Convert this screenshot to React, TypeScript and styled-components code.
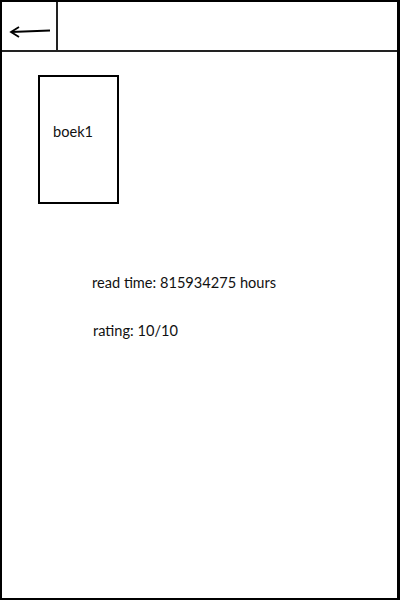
import React from 'react';
import styled, { createGlobalStyle } from 'styled-components';

const GlobalStyle = createGlobalStyle`
  html, body {
    margin: 0;
    padding: 0;
    background: #fff;
  }
  body {
    font-family: Lato, "Open Sans", sans-serif;
    color: #111;
  }
`;

const Frame = styled.div`
  width: 400px;
  height: 600px;
  box-sizing: border-box;
  border: 2px solid #000;
  border-right-width: 3px;
  display: flex;
  flex-direction: column;
`;

const TopBar = styled.header`
  height: 48px;
  border-bottom: 2px solid #222;
  display: flex;
`;

const BackButton = styled.button`
  width: 56px;
  border: none;
  border-right: 2px solid #222;
  background: transparent;
  padding: 23px 0 0 7px;
  display: flex;
  align-items: flex-start;
  cursor: pointer;
`;

const Content = styled.main`
  flex: 1;
  padding: 23px 0 0 36px;
  display: flex;
  flex-direction: column;
`;

const BookCover = styled.div`
  box-sizing: border-box;
  width: 81px;
  height: 129px;
  border: 2px solid #000;
  padding: 46px 0 0 13px;
  font-size: 14.6px;
`;

const Stats = styled.div`
  margin: 70px 0 0 54px;
  display: flex;
  flex-direction: column;
  gap: 31px;
  font-size: 14.6px;
`;

const Stat = styled.div<{ $indent?: number }>`
  padding-left: ${(p) => p.$indent ?? 0}px;
`;

const App: React.FC = () => {
  return (
    <>
      <GlobalStyle />
      <Frame>
        <TopBar>
          <BackButton aria-label="back">
            <svg width="44" height="14" viewBox="0 0 44 14">
              <path d="M2 7 L41 5.5" stroke="#000" strokeWidth="2" />
              <path d="M10 2 L2 7 L10 12" stroke="#000" strokeWidth="1.8" fill="none" />
            </svg>
          </BackButton>
        </TopBar>
        <Content>
          <BookCover>boek1</BookCover>
          <Stats>
            <Stat>read time: 815934275 hours</Stat>
            <Stat $indent={1}>rating: 10/10</Stat>
          </Stats>
        </Content>
      </Frame>
    </>
  );
};

export default App;
